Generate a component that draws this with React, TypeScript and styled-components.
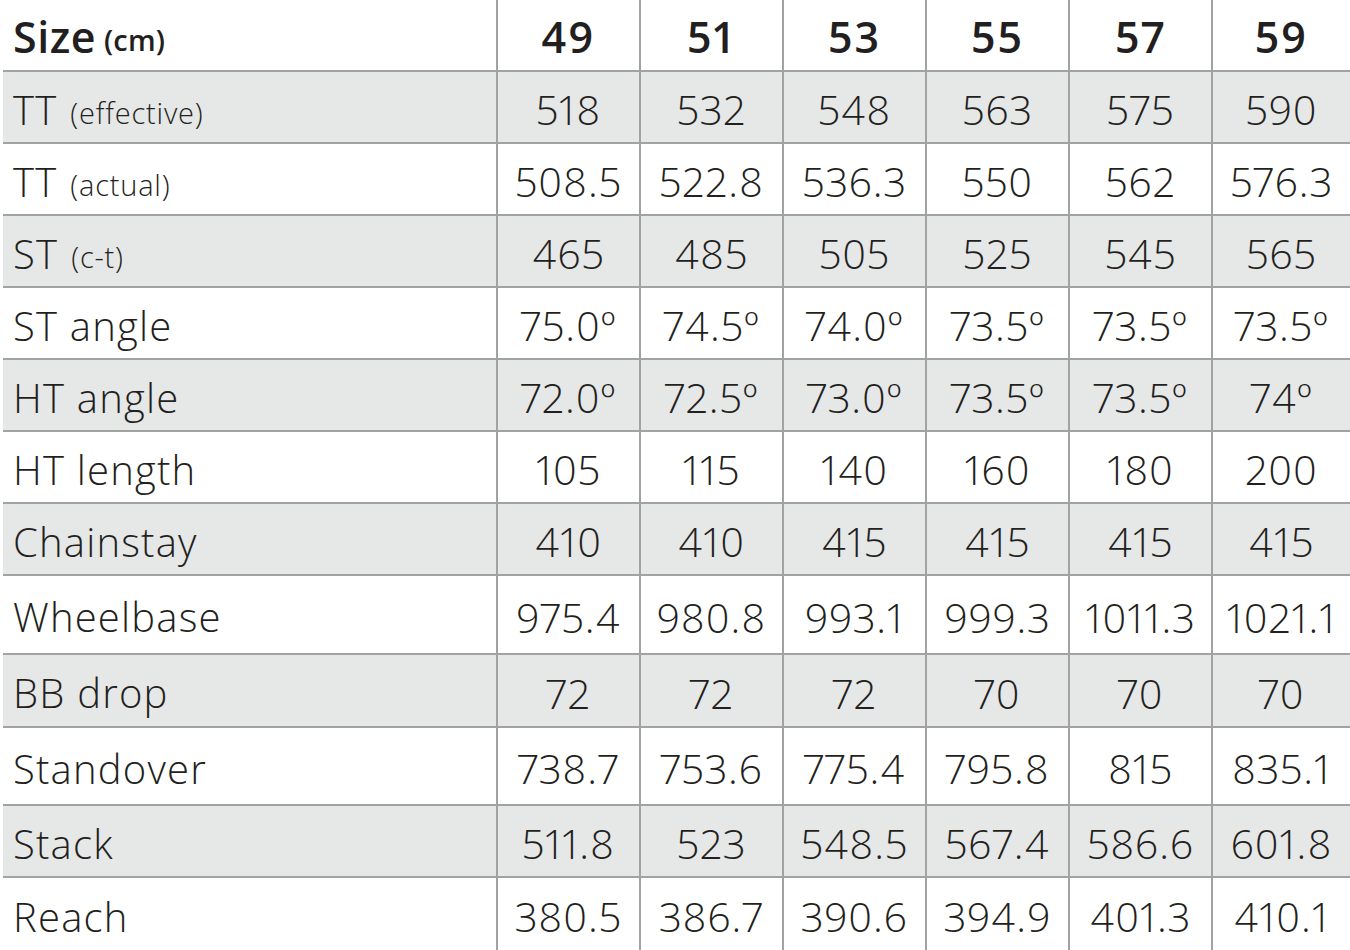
import React from 'react';
import styled, { createGlobalStyle } from 'styled-components';

const GlobalStyle = createGlobalStyle`
  html, body {
    margin: 0;
    padding: 0;
    background: #ffffff;
  }
  body {
    font-family: "Open Sans", "Liberation Sans", sans-serif;
    color: #231f20;
  }
`;

const Table = styled.div`
  width: 1350px;
  height: 950px;
  padding-left: 3px;
  box-sizing: border-box;
  overflow: hidden;
  display: flex;
  flex-direction: column;
`;

const Row = styled.div<{ $shaded?: boolean; $height: number; $last?: boolean }>`
  display: grid;
  grid-template-columns: 493px repeat(5, 143px) 1fr;
  height: ${(p) => p.$height}px;
  box-sizing: border-box;
  background: ${(p) => (p.$shaded ? '#e6e7e7' : '#ffffff')};
  border-bottom: ${(p) => (p.$last ? 'none' : '2px solid #a2a2a2')};
`;

const LabelCell = styled.div<{ $header?: boolean }>`
  display: flex;
  align-items: center;
  padding-left: 10px;
  padding-top: ${(p) => (p.$header ? '2px' : '4px')};
  font-size: ${(p) => (p.$header ? '43px' : '40px')};
  font-weight: ${(p) => (p.$header ? 600 : 300)};
  letter-spacing: ${(p) => (p.$header ? '0.5px' : '1.2px')};
  white-space: nowrap;
`;

const Note = styled.span<{ $header?: boolean }>`
  font-size: ${(p) => (p.$header ? '29px' : '29px')};
  margin-left: ${(p) => (p.$header ? '8px' : '13px')};
  margin-top: 6px;
  letter-spacing: ${(p) => (p.$header ? '0.2px' : '0.8px')};
`;

const ValueCell = styled.div<{ $header?: boolean }>`
  display: flex;
  align-items: center;
  justify-content: center;
  border-left: 2px solid #a2a2a2;
  padding-top: ${(p) => (p.$header ? '2px' : '4px')};
  font-size: ${(p) => (p.$header ? '43px' : '41px')};
  font-weight: ${(p) => (p.$header ? 600 : 300)};
  letter-spacing: ${(p) => (p.$header ? '2px' : '1px')};
  font-variant-numeric: proportional-nums;
  white-space: nowrap;
`;

type GeoRow = {
  label: string;
  note?: string;
  values: string[];
  height: number;
};

const sizes = ['49', '51', '53', '55', '57', '59'];

const rows: GeoRow[] = [
  { label: 'TT', note: '(effective)', values: ['518', '532', '548', '563', '575', '590'], height: 72 },
  { label: 'TT', note: '(actual)', values: ['508.5', '522.8', '536.3', '550', '562', '576.3'], height: 72 },
  { label: 'ST', note: '(c-t)', values: ['465', '485', '505', '525', '545', '565'], height: 72 },
  { label: 'ST angle', values: ['75.0º', '74.5º', '74.0º', '73.5º', '73.5º', '73.5º'], height: 72 },
  { label: 'HT angle', values: ['72.0º', '72.5º', '73.0º', '73.5º', '73.5º', '74º'], height: 72 },
  { label: 'HT length', values: ['105', '115', '140', '160', '180', '200'], height: 72 },
  { label: 'Chainstay', values: ['410', '410', '415', '415', '415', '415'], height: 72 },
  { label: 'Wheelbase', values: ['975.4', '980.8', '993.1', '999.3', '1011.3', '1021.1'], height: 79 },
  { label: 'BB drop', values: ['72', '72', '72', '70', '70', '70'], height: 73 },
  { label: 'Standover', values: ['738.7', '753.6', '775.4', '795.8', '815', '835.1'], height: 78 },
  { label: 'Stack', values: ['511.8', '523', '548.5', '567.4', '586.6', '601.8'], height: 72 },
  { label: 'Reach', values: ['380.5', '386.7', '390.6', '394.9', '401.3', '410.1'], height: 72 },
];

export default function App() {
  return (
    <>
      <GlobalStyle />
      <Table>
        <Row $height={72}>
          <LabelCell $header>
            Size<Note $header>(cm)</Note>
          </LabelCell>
          {sizes.map((s) => (
            <ValueCell key={s} $header>
              {s}
            </ValueCell>
          ))}
        </Row>
        {rows.map((row, i) => (
          <Row
            key={row.label + (row.note ?? '')}
            $shaded={i % 2 === 0}
            $height={row.height}
            $last={i === rows.length - 1}
          >
            <LabelCell>
              {row.label}
              {row.note && <Note>{row.note}</Note>}
            </LabelCell>
            {row.values.map((v, j) => (
              <ValueCell key={j}>{v}</ValueCell>
            ))}
          </Row>
        ))}
      </Table>
    </>
  );
}
